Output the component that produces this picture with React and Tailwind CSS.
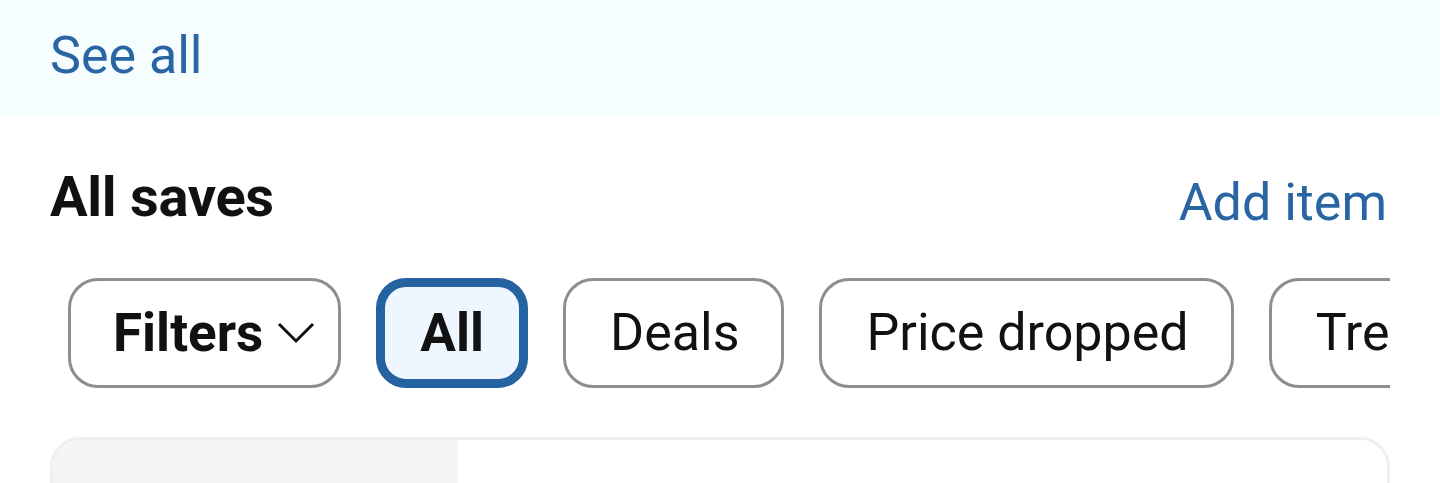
export default function App() {
  const chips = ["Deals", "Price dropped", "Trending"];

  return (
    <div className="w-[1440px] h-[483px] overflow-hidden bg-white font-['Roboto',sans-serif] text-[#111111]">
      {/* See all band */}
      <div className="h-[117px] bg-[#f5fdff] px-[50px] flex items-center">
        <span className="text-[52px] leading-none text-[#2a65a3] -mt-[6px]">See all</span>
      </div>

      {/* Section header */}
      <div className="px-[50px] pt-[52px] flex items-end justify-between">
        <h2 className="text-[56px] font-bold leading-none tracking-[-0.3px]">All saves</h2>
        <button className="text-[52px] leading-none text-[#2a65a3] mb-[-4px] mr-[3px]">Add item</button>
      </div>

      {/* Chips */}
      <div className="mx-[50px] mt-[53px] overflow-hidden">
        <div className="flex gap-[35px] pl-[18px] w-max">
          <button className="h-[110px] rounded-[30px] border-[3px] border-[#8e8e8e] bg-white pl-[42px] pr-[23px] flex items-center gap-[14px]">
            <span className="text-[53px] font-bold leading-none">Filters</span>
            <svg width="38" height="22" viewBox="0 0 38 22" fill="none" stroke="#111" strokeWidth="3">
              <path d="M2 2 L19 19 L36 2" />
            </svg>
          </button>
          <button className="h-[110px] rounded-[30px] border-[9px] border-[#2462a0] bg-[#eef7ff] px-[35px] flex items-center">
            <span className="text-[53px] font-bold leading-none">All</span>
          </button>
          {chips.map((c) => (
            <button
              key={c}
              className="h-[110px] rounded-[30px] border-[3px] border-[#8e8e8e] bg-white pl-[44px] pr-[42px] flex items-center"
            >
              <span className="text-[52px] leading-none">{c}</span>
            </button>
          ))}
        </div>
      </div>

      {/* Item card */}
      <div className="mx-[50px] mt-[49px] h-[140px] rounded-[30px] border-[3px] border-[#efefef] overflow-hidden flex">
        <div className="w-[405px] bg-[#f5f5f5]" />
        <div className="flex-1 bg-white" />
      </div>
    </div>
  );
}
